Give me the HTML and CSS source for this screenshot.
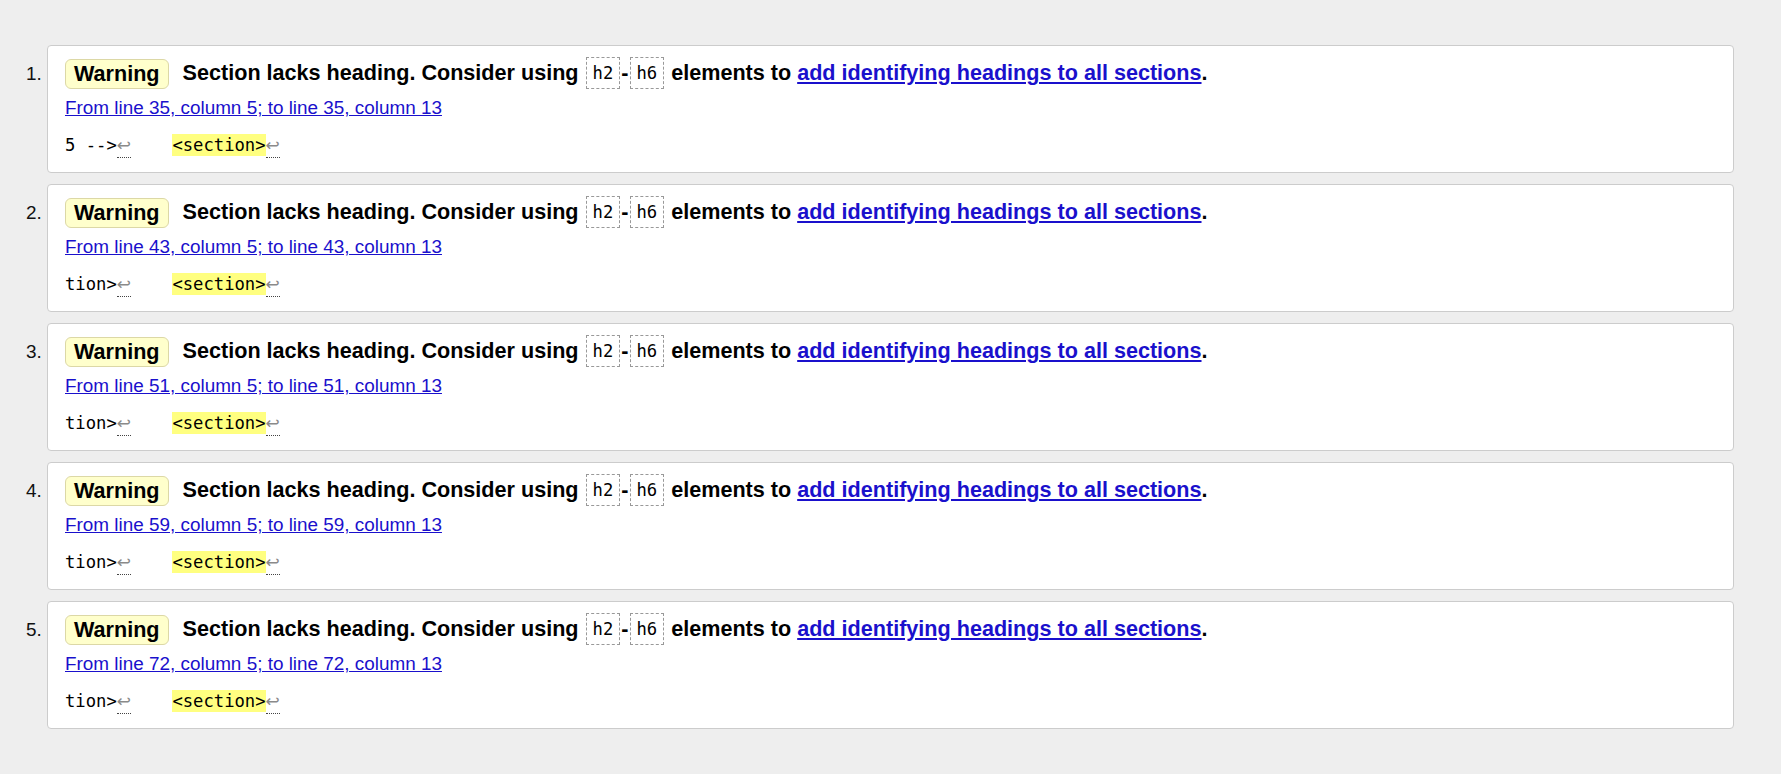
FILE: index.html
```html
<!DOCTYPE html>
<html lang="en">
<head>
<meta charset="utf-8">
<title>Validation results</title>
<link rel="stylesheet" href="styles.css">
</head>
<body>
<ol class="results">
  <li class="item">
    <p class="message"><span class="badge">Warning</span> Section lacks heading. Consider using <code class="tag">h2</code>-<code class="tag">h6</code> elements to <a class="ref" href="#">add identifying headings to all sections</a>.</p>
    <p class="location"><a href="#">From line 35, column 5; to line 35, column 13</a></p>
    <p class="extract"><code>5 --&gt;<b class="lf">↩</b>    <mark>&lt;section&gt;</mark><b class="lf">↩</b></code></p>
  </li>
  <li class="item">
    <p class="message"><span class="badge">Warning</span> Section lacks heading. Consider using <code class="tag">h2</code>-<code class="tag">h6</code> elements to <a class="ref" href="#">add identifying headings to all sections</a>.</p>
    <p class="location"><a href="#">From line 43, column 5; to line 43, column 13</a></p>
    <p class="extract"><code>tion&gt;<b class="lf">↩</b>    <mark>&lt;section&gt;</mark><b class="lf">↩</b></code></p>
  </li>
  <li class="item">
    <p class="message"><span class="badge">Warning</span> Section lacks heading. Consider using <code class="tag">h2</code>-<code class="tag">h6</code> elements to <a class="ref" href="#">add identifying headings to all sections</a>.</p>
    <p class="location"><a href="#">From line 51, column 5; to line 51, column 13</a></p>
    <p class="extract"><code>tion&gt;<b class="lf">↩</b>    <mark>&lt;section&gt;</mark><b class="lf">↩</b></code></p>
  </li>
  <li class="item">
    <p class="message"><span class="badge">Warning</span> Section lacks heading. Consider using <code class="tag">h2</code>-<code class="tag">h6</code> elements to <a class="ref" href="#">add identifying headings to all sections</a>.</p>
    <p class="location"><a href="#">From line 59, column 5; to line 59, column 13</a></p>
    <p class="extract"><code>tion&gt;<b class="lf">↩</b>    <mark>&lt;section&gt;</mark><b class="lf">↩</b></code></p>
  </li>
  <li class="item">
    <p class="message"><span class="badge">Warning</span> Section lacks heading. Consider using <code class="tag">h2</code>-<code class="tag">h6</code> elements to <a class="ref" href="#">add identifying headings to all sections</a>.</p>
    <p class="location"><a href="#">From line 72, column 5; to line 72, column 13</a></p>
    <p class="extract"><code>tion&gt;<b class="lf">↩</b>    <mark>&lt;section&gt;</mark><b class="lf">↩</b></code></p>
  </li>
</ol>
</body>
</html>
```

FILE: styles.css
```css
html, body {
  margin: 0;
  padding: 0;
}

body {
  background: #eeeeee;
  font-family: "Liberation Sans", Arial, sans-serif;
  color: #000;
}

.results {
  margin: 45px 47px 0;
  padding: 0;
  font-size: 18.9px;
}

.item {
  background: #fff;
  border: 1px solid #cccccc;
  border-radius: 4px;
  padding: 11px 17px 9px;
  margin-bottom: 11px;
}

.item::marker {
  font-family: "Liberation Sans", Arial, sans-serif;
  font-size: 18.9px;
  color: #111;
}

.message {
  margin: 0;
  font-size: 21.6px;
  font-weight: bold;
  line-height: 32px;
  white-space: nowrap;
}

.badge {
  display: inline-block;
  background: #ffffcc;
  border: 1px solid #dcd8a6;
  border-radius: 6px;
  padding: 0 8px;
  line-height: 28px;
  margin-right: 8px;
  vertical-align: -1px;
}

.tag {
  display: inline-block;
  vertical-align: top;
  font-family: "DejaVu Sans Mono", monospace;
  font-size: 17.2px;
  font-weight: normal;
  line-height: 29px;
  padding: 1px 5.5px 0;
  margin: 0 1.5px;
  border: 1px dashed #999999;
}

a {
  color: #1a10cc;
  text-decoration: underline;
}

.location {
  margin: 0;
  font-size: 18.9px;
  line-height: 38px;
}

.extract {
  margin: 0;
  font-family: "DejaVu Sans Mono", monospace;
  font-size: 17.2px;
  line-height: 36px;
  white-space: pre;
}

.extract code {
  font-family: inherit;
  font-size: inherit;
}

.extract mark {
  background: #ffff80;
  color: #000;
  padding: 1px 0;
}

.lf {
  font-family: "DejaVu Sans", sans-serif;
  font-weight: normal;
  font-size: 17px;
  color: #8a8a8a;
  border-bottom: 1px dotted #444;
  padding-bottom: 2px;
}
```
